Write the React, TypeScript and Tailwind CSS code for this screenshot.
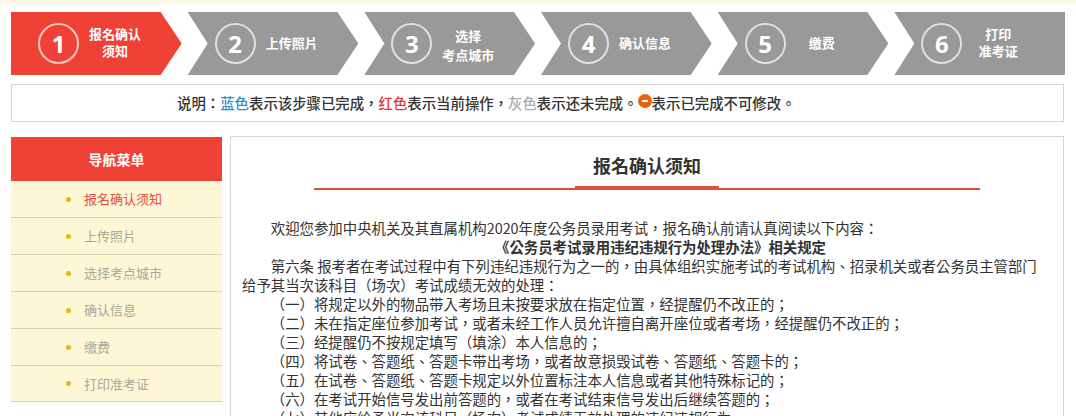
const FONT = "font-['Noto_Sans_CJK_TC','Noto_Sans_CJK_SC','Liberation_Sans',sans-serif]";

const mid = "[clip-path:polygon(0_0,calc(100%-21px)_0,100%_50%,calc(100%-21px)_100%,0_100%,20px_50%)]";

const steps = [
  { n: 1, lines: ["报名确认", "须知"], clip: "[clip-path:polygon(0_0,calc(100%-21px)_0,100%_50%,calc(100%-21px)_100%,0_100%)]", bg: "bg-[#ef4136]", text: "leading-[17px] -translate-y-[2px]" },
  { n: 2, lines: ["上传照片"], clip: mid, bg: "bg-[#999999]", text: "leading-[18px] -translate-y-[1px]" },
  { n: 3, lines: ["选择", "考点城市"], clip: mid, bg: "bg-[#999999]", text: "leading-[19px] translate-y-[1px]" },
  { n: 4, lines: ["确认信息"], clip: mid, bg: "bg-[#999999]", text: "leading-[18px] -translate-y-[1px]" },
  { n: 5, lines: ["缴费"], clip: mid, bg: "bg-[#999999]", text: "leading-[18px] -translate-y-[1px]" },
  { n: 6, lines: ["打印", "准考证"], clip: "[clip-path:polygon(0_0,100%_0,100%_100%,0_100%,20px_50%)]", bg: "bg-[#999999]", text: "leading-[17px] -translate-y-[2px]" },
];

const menu = ["报名确认须知", "上传照片", "选择考点城市", "确认信息", "缴费", "打印准考证"];

const items = [
  "（一）将规定以外的物品带入考场且未按要求放在指定位置，经提醒仍不改正的；",
  "（二）未在指定座位参加考试，或者未经工作人员允许擅自离开座位或者考场，经提醒仍不改正的；",
  "（三）经提醒仍不按规定填写（填涂）本人信息的；",
  "（四）将试卷、答题纸、答题卡带出考场，或者故意损毁试卷、答题纸、答题卡的；",
  "（五）在试卷、答题纸、答题卡规定以外位置标注本人信息或者其他特殊标记的；",
  "（六）在考试开始信号发出前答题的，或者在考试结束信号发出后继续答题的；",
  "（七）其他应给予当次该科目（场次）考试成绩无效处理的违纪违规行为。",
];

export default function App() {
  return (
    <div className={`h-[416px] w-[1076px] overflow-hidden bg-white ${FONT}`}>
      <div className="h-[4px] bg-[#fdfbe8]" />
      <div className="mx-[11px] mt-[8px] flex gap-[6px]">
        {steps.map((s) => (
          <div key={s.n} className={`flex h-[63px] flex-1 items-center text-white ${s.bg} ${s.clip}`}>
            <div className="ml-[27px] flex h-[41px] w-[41px] shrink-0 items-center justify-center rounded-full border-2 border-white/70 text-[24px] font-bold font-['Open_Sans',sans-serif] leading-none">
              {s.n}
            </div>
            <div className={`ml-[7px] w-[58px] text-center text-[13px] font-bold ${s.text}`}>
              {s.lines.map((l) => (
                <div key={l} className="whitespace-nowrap">{l}</div>
              ))}
            </div>
          </div>
        ))}
      </div>

      <div className="ml-[11px] mr-[12px] mt-[9px] flex h-[38px] items-center border border-[#dcd2d2] pl-[165px] text-[14.4px] font-medium text-[#333333]">
        <span>说明：</span>
        <span className="text-[#2f8fd0]">蓝色</span>
        <span>表示该步骤已完成，</span>
        <span className="text-[#e0393e]">红色</span>
        <span>表示当前操作，</span>
        <span className="text-[#aaaaaa]">灰色</span>
        <span>表示还未完成。</span>
        <span className="mb-[5px] flex h-[14px] w-[14px] items-center justify-center rounded-full bg-[#e8640f]">
          <span className="h-[2px] w-[6px] bg-white" />
        </span>
        <span>表示已完成不可修改。</span>
      </div>

      <div className="ml-[11px] mr-[12px] mt-[14px] flex gap-[8px]">
        <div className="mt-px w-[211px] shrink-0">
          <div className="flex h-[44px] items-center justify-center bg-[#ef4136] text-[14px] font-bold text-white">导航菜单</div>
          {menu.map((m, i) => (
            <div key={m} className={`flex items-center border-b border-[#d6d0b4] bg-[#fdf7d5] pl-[55px] text-[13px] ${i === 5 ? "h-[36px]" : "h-[37px]"}`}>
              <span className="h-[5px] w-[5px] rounded-full bg-[#e5b716]" />
              <span className={`ml-[13px] ${i === 0 ? "text-[#e0523f]" : "text-[#aaa89c]"}`}>{m}</span>
            </div>
          ))}
        </div>

        <div className="h-[300px] flex-1 border border-b-0 border-[#dcd2d2] pl-[11px] pr-[18px] text-[14.4px] leading-[19px] text-[#333333]">
          <div className="flex flex-col items-center pl-[7px]">
            <div className="mt-[15px] flex h-[38px] w-[666px] justify-center border-b-2 border-[#d9503f]">
              <div className="flex w-[144px] justify-center border-b-[2px] border-[#d9503f]">
                <span className="text-[18px] font-bold leading-[26px]">报名确认须知</span>
              </div>
            </div>
          </div>
          <div className="mt-[28px]">
            <p className="indent-[2em]">欢迎您参加中央机关及其直属机构2020年度公务员录用考试，报名确认前请认真阅读以下内容：</p>
            <p className="pl-[34px] text-center font-bold">《公务员考试录用违纪违规行为处理办法》相关规定</p>
            <p className="indent-[2em]">第六条 报考者在考试过程中有下列违纪违规行为之一的，由具体组织实施考试的考试机构、招录机关或者公务员主管部门给予其当次该科目（场次）考试成绩无效的处理：</p>
            {items.map((t) => (
              <p key={t} className="indent-[2em] whitespace-nowrap">{t}</p>
            ))}
          </div>
        </div>
      </div>
    </div>
  );
}
